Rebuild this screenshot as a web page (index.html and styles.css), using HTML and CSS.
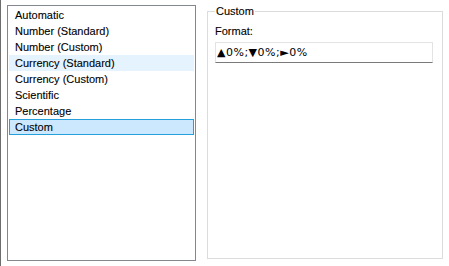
FILE: index.html
```html
<!DOCTYPE html>
<html lang="en">
<head>
    <meta charset="UTF-8">
    <title>Number Format</title>
    <link rel="stylesheet" href="styles.css">
</head>
<body>
    <div class="dialog">
        <div class="edge"></div>
        <ul class="format-list">
            <li>Automatic</li>
            <li>Number (Standard)</li>
            <li>Number (Custom)</li>
            <li class="hover">Currency (Standard)</li>
            <li>Currency (Custom)</li>
            <li>Scientific</li>
            <li>Percentage</li>
            <li class="selected">Custom</li>
        </ul>
        <fieldset class="options">
            <legend>Custom</legend>
            <label for="format">Format:</label>
            <input type="text" id="format" value="▲0%;▼0%;►0%">
        </fieldset>
    </div>
</body>
</html>
```
FILE: styles.css
```css
body {
    margin: 0;
    background: #fff;
    font-family: "Liberation Sans", Arial, sans-serif;
    font-size: 11px;
    color: #000;
}
.dialog {
    display: flex;
    align-items: flex-start;
    height: 266px;
}
.edge {
    width: 1px;
    height: 266px;
    background: #6d6d6d;
}
.format-list {
    list-style: none;
    margin: 5px 0 0 6px;
    padding: 1px 1px;
    box-sizing: border-box;
    width: 189px;
    height: 256px;
    border: 1px solid #828790;
}
.format-list li {
    height: 16px;
    line-height: 16px;
    padding-left: 6px;
    box-sizing: border-box;
    -webkit-text-stroke: 0.1px #000;
}
.format-list li.hover {
    background: #e5f3ff;
}
.format-list li.selected {
    background: #cce8ff;
    border: 1px solid #26a0da;
    line-height: 14px;
    padding-left: 5px;
}
.options {
    margin: 5px 0 0 11px;
    padding: 6px 9px 0 7px;
    box-sizing: border-box;
    width: 236px;
    height: 254px;
    border: 1px solid #dcdcdc;
}
.options legend {
    padding: 0 1px;
    margin-left: 0;
    line-height: 13px;
    -webkit-text-stroke: 0.1px #000;
}
.options label {
    display: block;
    line-height: 14px;
    margin-bottom: 4px;
    -webkit-text-stroke: 0.1px #000;
}
.options input {
    display: block;
    box-sizing: border-box;
    width: 218px;
    height: 21px;
    margin: 0;
    padding: 0 1px;
    border: 1px solid #e3e3e3;
    border-bottom-color: #7a7a7a;
    font-family: "DejaVu Sans", sans-serif;
    font-size: 11px;
    letter-spacing: 0.5px;
    color: #000;
    outline: none;
}
```
